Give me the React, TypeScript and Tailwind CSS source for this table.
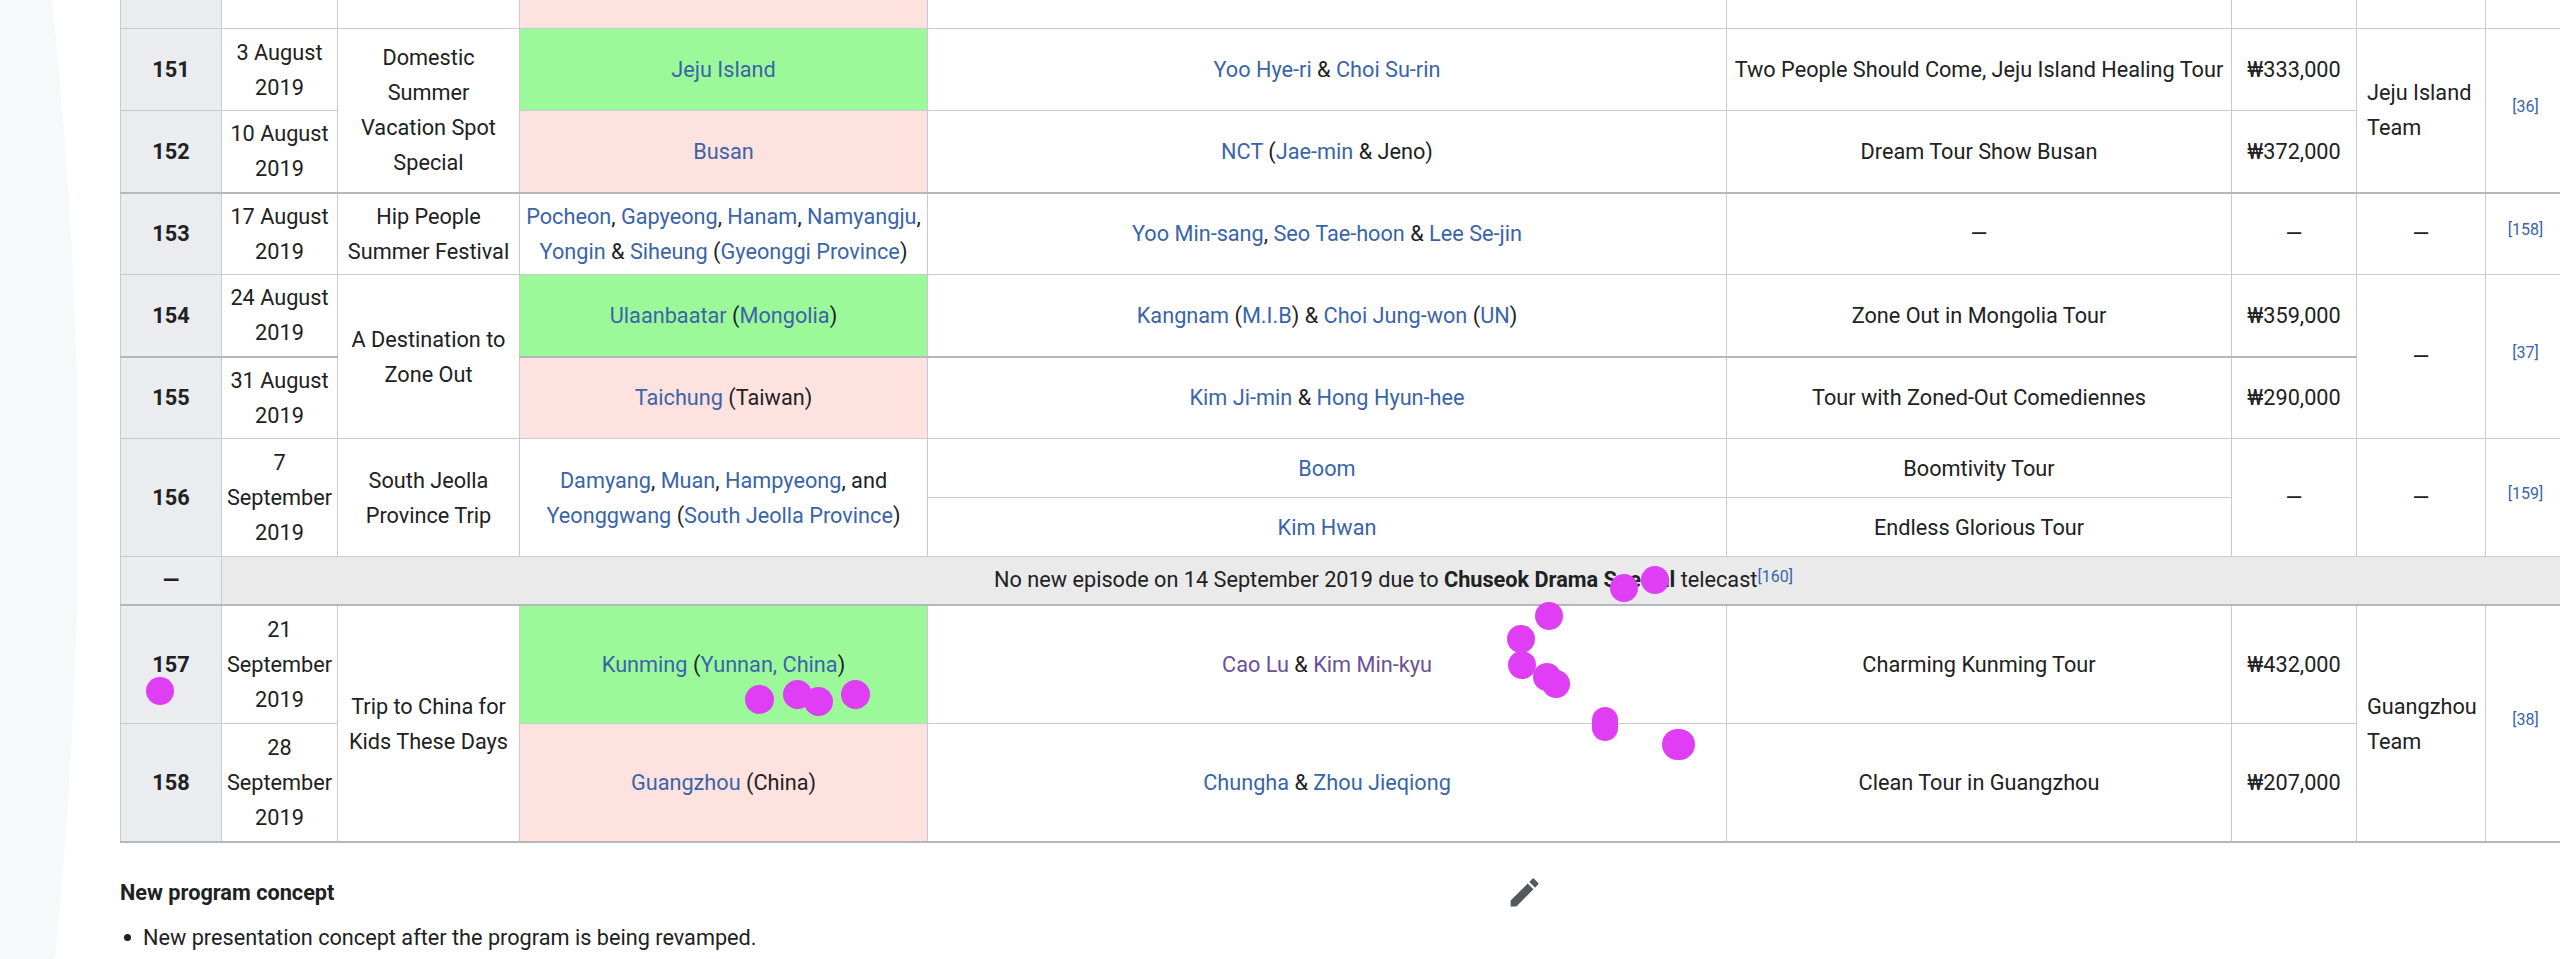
import type { ReactNode } from 'react'

const td = 'border border-[#c8ccd1] px-[4px] py-[5px] text-center align-middle'
const th = 'border border-[#c8ccd1] bg-[#eaecf0] px-[4px] py-[5px] text-center align-middle font-bold'
const green = 'bg-[#9cf99a]'
const pink = 'bg-[#fde2df]'
const thick = 'border-b-2 border-b-[#b4b8bd]'

function A({ children }: { children: ReactNode }) {
  return <span className="text-[#3a64a8]">{children}</span>
}

function V({ children }: { children: ReactNode }) {
  return <span className="text-[#6b4f9a]">{children}</span>
}

function Ref({ n }: { n: string }) {
  return <span className="relative -top-[5px] text-[16px] text-[#3a64a8]">[{n}]</span>
}

// touch marks on the screenshot
const dots = [
  'left-[146px] top-[677px] w-[28px] h-[28px]',
  'left-[745px] top-[685px] w-[29px] h-[29px]',
  'left-[783px] top-[680px] w-[29px] h-[29px]',
  'left-[804px] top-[687px] w-[29px] h-[29px]',
  'left-[841px] top-[680px] w-[29px] h-[29px]',
  'left-[1610px] top-[574px] w-[28px] h-[28px]',
  'left-[1641px] top-[566px] w-[28px] h-[28px]',
  'left-[1535px] top-[602px] w-[28px] h-[28px]',
  'left-[1507px] top-[625px] w-[28px] h-[28px]',
  'left-[1508px] top-[651px] w-[28px] h-[28px]',
  'left-[1533px] top-[663px] w-[28px] h-[28px]',
  'left-[1542px] top-[670px] w-[28px] h-[28px]',
  'left-[1592px] top-[707px] w-[26px] h-[34px]',
  'left-[1662px] top-[729px] w-[33px] h-[31px]',
]

export default function App() {
  return (
    <div className="relative w-[2560px] h-[959px] overflow-hidden bg-white font-[Roboto,sans-serif] text-[21.7px] leading-[35px] text-[#202122]">

      <svg className="absolute left-0 top-0" width="110" height="959" viewBox="0 0 110 959">
        <path d="M0 0 L52 0 Q103 480 55 959 L0 959 Z" fill="#f7f8f9" />
      </svg>

      <div className="relative pl-[120px]">

        <table className="-mt-[54px] w-[2445px] table-fixed border-collapse">
          <colgroup>
            <col className="w-[101px]" />
            <col className="w-[116px]" />
            <col className="w-[182px]" />
            <col className="w-[408px]" />
            <col className="w-[799px]" />
            <col className="w-[505px]" />
            <col className="w-[125px]" />
            <col className="w-[129px]" />
            <col className="w-[80px]" />
          </colgroup>
          <tbody>

            {/* tail of the previous episode, scrolled mostly out of view */}
            <tr className="h-[82px]">
              <th className={th}></th>
              <td className={`${td} align-bottom pb-[4px]`}>2019</td>
              <td className={td}></td>
              <td className={`${td} ${pink}`}></td>
              <td className={td}></td>
              <td className={td}></td>
              <td className={td}></td>
              <td className={td}></td>
              <td className={td}></td>
            </tr>

            <tr className="h-[82px]">
              <th className={th}>151</th>
              <td className={td}>3 August<br />2019</td>
              <td className={`${td} ${thick}`} rowSpan={2}>Domestic<br />Summer<br />Vacation Spot<br />Special</td>
              <td className={`${td} ${green}`}><A>Jeju Island</A></td>
              <td className={td}><A>Yoo Hye-ri</A> &amp; <A>Choi Su-rin</A></td>
              <td className={`${td} whitespace-nowrap`}>Two People Should Come, Jeju Island Healing Tour</td>
              <td className={td}>₩333,000</td>
              <td className={`${td} ${thick} !text-left pl-[10px]`} rowSpan={2}>Jeju Island<br />Team</td>
              <td className={`${td} ${thick}`} rowSpan={2}><Ref n="36" /></td>
            </tr>

            <tr className="h-[82px]">
              <th className={`${th} ${thick}`}>152</th>
              <td className={`${td} ${thick}`}>10 August<br />2019</td>
              <td className={`${td} ${pink} ${thick}`}><A>Busan</A></td>
              <td className={`${td} ${thick}`}><A>NCT</A> (<A>Jae-min</A> &amp; Jeno)</td>
              <td className={`${td} ${thick}`}>Dream Tour Show Busan</td>
              <td className={`${td} ${thick}`}>₩372,000</td>
            </tr>

            <tr className="h-[82px]">
              <th className={th}>153</th>
              <td className={td}>17 August<br />2019</td>
              <td className={td}>Hip People<br />Summer Festival</td>
              <td className={`${td} whitespace-nowrap`}>
                <A>Pocheon</A>, <A>Gapyeong</A>, <A>Hanam</A>, <A>Namyangju</A>,<br />
                <A>Yongin</A> &amp; <A>Siheung</A> (<A>Gyeonggi Province</A>)
              </td>
              <td className={td}><A>Yoo Min-sang</A>, <A>Seo Tae-hoon</A> &amp; <A>Lee Se-jin</A></td>
              <td className={td}>—</td>
              <td className={td}>—</td>
              <td className={td}>—</td>
              <td className={td}><Ref n="158" /></td>
            </tr>

            <tr className="h-[82px]">
              <th className={`${th} ${thick}`}>154</th>
              <td className={`${td} ${thick}`}>24 August<br />2019</td>
              <td className={td} rowSpan={2}>A Destination to<br />Zone Out</td>
              <td className={`${td} ${green} ${thick}`}><A>Ulaanbaatar</A> (<A>Mongolia</A>)</td>
              <td className={`${td} ${thick}`}><A>Kangnam</A> (<A>M.I.B</A>) &amp; <A>Choi Jung-won</A> (<A>UN</A>)</td>
              <td className={`${td} ${thick}`}>Zone Out in Mongolia Tour</td>
              <td className={`${td} ${thick}`}>₩359,000</td>
              <td className={td} rowSpan={2}>—</td>
              <td className={td} rowSpan={2}><Ref n="37" /></td>
            </tr>

            <tr className="h-[82px]">
              <th className={th}>155</th>
              <td className={td}>31 August<br />2019</td>
              <td className={`${td} ${pink}`}><A>Taichung</A> (Taiwan)</td>
              <td className={td}><A>Kim Ji-min</A> &amp; <A>Hong Hyun-hee</A></td>
              <td className={td}>Tour with Zoned-Out Comediennes</td>
              <td className={td}>₩290,000</td>
            </tr>

            <tr className="h-[59px]">
              <th className={th} rowSpan={2}>156</th>
              <td className={td} rowSpan={2}>7<br />September<br />2019</td>
              <td className={td} rowSpan={2}>South Jeolla<br />Province Trip</td>
              <td className={`${td} whitespace-nowrap`} rowSpan={2}>
                <A>Damyang</A>, <A>Muan</A>, <A>Hampyeong</A>, and<br />
                <A>Yeonggwang</A> (<A>South Jeolla Province</A>)
              </td>
              <td className={td}><A>Boom</A></td>
              <td className={td}>Boomtivity Tour</td>
              <td className={td} rowSpan={2}>—</td>
              <td className={td} rowSpan={2}>—</td>
              <td className={td} rowSpan={2}><Ref n="159" /></td>
            </tr>
            <tr className="h-[59px]">
              <td className={td}><A>Kim Hwan</A></td>
              <td className={td}>Endless Glorious Tour</td>
            </tr>

            <tr className="h-[47px]">
              <th className={`${th} ${thick}`}>—</th>
              <td className={`${td} ${thick} bg-[#eaeaea]`} colSpan={8}>
                No new episode on 14 September 2019 due to <b>Chuseok Drama Special</b> telecast<Ref n="160" />
              </td>
            </tr>

            <tr className="h-[118px]">
              <th className={th}>157</th>
              <td className={td}>21<br />September<br />2019</td>
              <td className={`${td} ${thick}`} rowSpan={2}>Trip to China for<br />Kids These Days</td>
              <td className={`${td} ${green}`}><A>Kunming</A> (<A>Yunnan, China</A>)</td>
              <td className={td}><V>Cao Lu</V> &amp; <V>Kim Min-kyu</V></td>
              <td className={td}>Charming Kunming Tour</td>
              <td className={td}>₩432,000</td>
              <td className={`${td} ${thick} !text-left pl-[10px]`} rowSpan={2}>Guangzhou<br />Team</td>
              <td className={`${td} ${thick}`} rowSpan={2}><Ref n="38" /></td>
            </tr>

            <tr className="h-[119px]">
              <th className={`${th} ${thick}`}>158</th>
              <td className={`${td} ${thick}`}>28<br />September<br />2019</td>
              <td className={`${td} ${pink} ${thick}`}><A>Guangzhou</A> (China)</td>
              <td className={`${td} ${thick}`}><A>Chungha</A> &amp; <A>Zhou Jieqiong</A></td>
              <td className={`${td} ${thick}`}>Clean Tour in Guangzhou</td>
              <td className={`${td} ${thick}`}>₩207,000</td>
            </tr>

          </tbody>
        </table>

        <div className="mt-[31px] flex w-[1423px] items-center justify-between">
          <h3 className="font-bold">New program concept</h3>
          <svg width="37" height="37" viewBox="0 0 24 24" fill="#54595d">
            <path d="M3 17.25V21h3.75L17.81 9.94l-3.75-3.75L3 17.25zM20.71 7.04c.39-.39.39-1.02 0-1.41l-2.34-2.34c-.39-.39-1.02-.39-1.41 0l-1.83 1.83 3.75 3.75 1.83-1.83z" />
          </svg>
        </div>

        <div className="mt-[9px] flex items-center">
          <span className="ml-[4px] mr-[12px] h-[7px] w-[7px] rounded-full bg-[#202122]"></span>
          <span>New presentation concept after the program is being revamped.</span>
        </div>

      </div>

      {dots.map((d, i) => (
        <div key={i} className={`absolute rounded-full bg-[#df3ef4] ${d}`}></div>
      ))}

    </div>
  )
}
